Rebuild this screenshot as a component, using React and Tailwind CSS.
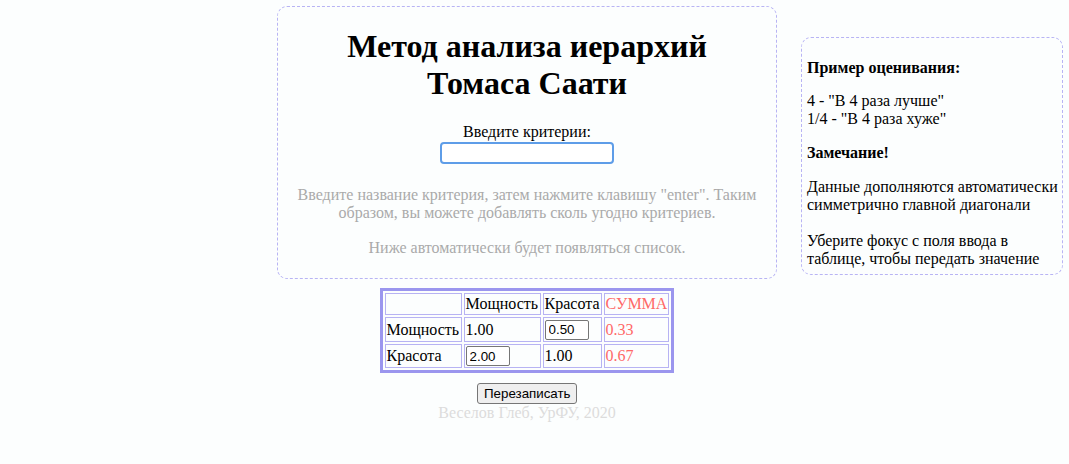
import React from 'react'

const cell = 'border border-[#b7b3f3] p-[1px] text-left align-middle font-normal'
const red = 'text-[#ff6868]'

function NumInput({ value }) {
  return (
    <input
      defaultValue={value}
      className="box-border h-[20px] w-[44px] rounded-[2px] border border-[#767676] bg-white px-[3px] font-['Liberation_Sans',Arial,sans-serif] text-[13.33px] text-black outline-none"
    />
  )
}

export default function App() {
  return (
    <div className="min-h-[464px] bg-[#fcfefe] font-['Liberation_Serif','Times_New_Roman',serif] text-[16px] text-black">
      <div className="flex items-start">
        <div className="ml-[277px] flex w-[500px] flex-col items-center">
          <div className="mt-[6px] w-[500px] rounded-[10px] border border-dashed border-[#b8b4f4] px-[18px] pb-[5px] text-center">
            <h1 className="mt-[21px] mb-[21px] text-[32px] font-bold leading-[37px]">
              Метод анализа иерархий
              <br />
              Томаса Саати
            </h1>
            <div className="leading-[18px]">Введите критерии:</div>
            <div className="mt-[1px] flex justify-center">
              <input className="box-border h-[22px] w-[174px] rounded-[4px] border-2 border-[#5e9de8] bg-white px-[2px] font-['Liberation_Sans',Arial,sans-serif] text-[13.33px] outline-none" />
            </div>
            <p className="mt-[22px] leading-[18px] text-[#aaaaaa]">
              Введите название критерия, затем нажмите клавишу "enter". Таким образом, вы можете добавлять сколь угодно критериев.
            </p>
            <p className="mt-[17px] mb-4 leading-[18px] text-[#aaaaaa]">Ниже автоматически будет появляться список.</p>
          </div>

          <table className="mt-[9px] border-separate border-spacing-[2px] border-[3px] border-solid border-[#9b96ee] leading-[18px]">
            <tbody>
              <tr className="h-[21px]">
                <td className={`${cell} w-[77px]`}></td>
                <td className={`${cell} w-[77px]`}>Мощность</td>
                <td className={`${cell} w-[59px]`}>Красота</td>
                <td className={`${cell} w-[64px] ${red}`}>СУММА</td>
              </tr>
              <tr className="h-[25px]">
                <td className={cell}>Мощность</td>
                <td className={cell}>1.00</td>
                <td className={cell}>
                  <NumInput value="0.50" />
                </td>
                <td className={`${cell} ${red}`}>0.33</td>
              </tr>
              <tr className="h-[24px]">
                <td className={cell}>Красота</td>
                <td className={cell}>
                  <NumInput value="2.00" />
                </td>
                <td className={cell}>1.00</td>
                <td className={`${cell} ${red}`}>0.67</td>
              </tr>
            </tbody>
          </table>

          <button className="mt-[10px] box-border h-[21px] w-[100px] rounded-[3px] border border-[#767676] bg-[#efefef] px-[6px] font-['Liberation_Sans',Arial,sans-serif] text-[13.33px] leading-[15px] text-black">
            Перезаписать
          </button>
          <div className="leading-[18px] text-[#dcdcdc]">Веселов Глеб, УрФУ, 2020</div>
        </div>

        <div className="ml-[24px] mt-[37px] box-border h-[238px] w-[262px] rounded-[10px] border border-dashed border-[#b8b4f4] pl-[5px] pr-[1px] leading-[18px]">
          <p className="mt-[21px] font-bold">Пример оценивания:</p>
          <p className="mt-[15px]">
            4 - "В 4 раза лучше"
            <br />
            1/4 - "В 4 раза хуже"
          </p>
          <p className="mt-4 font-bold">Замечание!</p>
          <p className="mt-4 whitespace-nowrap">
            Данные дополняются автоматически
            <br />
            симметрично главной диагонали
            <br />
            <br />
            Уберите фокус с поля ввода в
            <br />
            таблице, чтобы передать значение
          </p>
        </div>
      </div>
    </div>
  )
}
